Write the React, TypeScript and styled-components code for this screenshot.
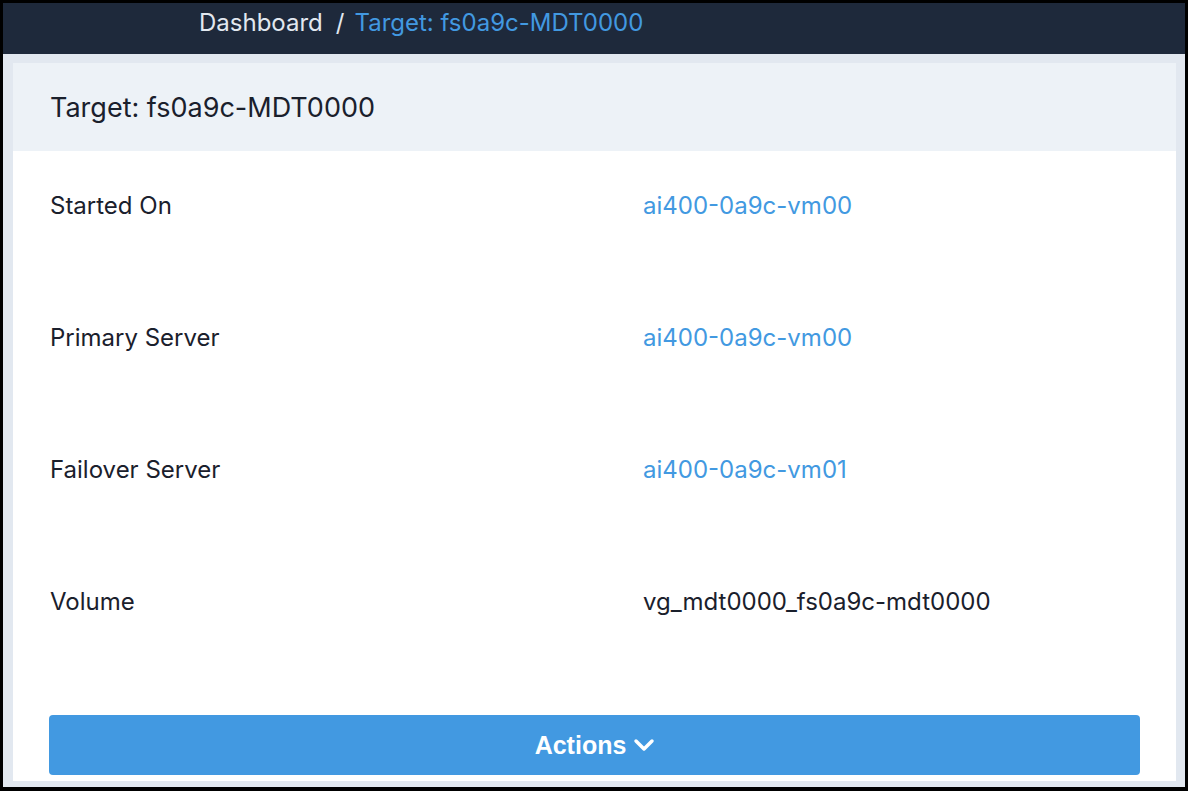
import React from "react";
import styled, { createGlobalStyle } from "styled-components";
import { ChevronDown } from "lucide-react";

const GlobalStyle = createGlobalStyle`
  html, body {
    margin: 0;
    padding: 0;
    background: #000;
  }
  body {
    font-family: Inter, "Noto Sans", sans-serif;
    color: #1a202c;
  }
`;

type Row = { label: string; value: string; link?: boolean };

const rows: Row[] = [
  { label: "Started On", value: "ai400-0a9c-vm00", link: true },
  { label: "Primary Server", value: "ai400-0a9c-vm00", link: true },
  { label: "Failover Server", value: "ai400-0a9c-vm01", link: true },
  { label: "Volume", value: "vg_mdt0000_fs0a9c-mdt0000" },
];

const App = () => {
  return (
    <>
      <GlobalStyle />
      <Frame>
        <NavBar>
          <Crumb>Dashboard</Crumb>
          <Separator>/</Separator>
          <CrumbActive>Target: fs0a9c-MDT0000</CrumbActive>
        </NavBar>
        <Main>
          <Card>
            <CardHeader>Target: fs0a9c-MDT0000</CardHeader>
            <CardBody>
              {rows.map((row) => (
                <DetailRow key={row.label}>
                  <Label>{row.label}</Label>
                  <Value $link={row.link}>{row.value}</Value>
                </DetailRow>
              ))}
              <ActionsButton>
                Actions
                <ChevronDown size={32} strokeWidth={2.6} />
              </ActionsButton>
            </CardBody>
          </Card>
        </Main>
      </Frame>
    </>
  );
};

const Frame = styled.div`
  box-sizing: border-box;
  width: 1188px;
  height: 791px;
  border: 3px solid #000;
  border-bottom-width: 4px;
  display: flex;
  flex-direction: column;
  overflow: hidden;
  background: #e2e8f0;
`;

const NavBar = styled.nav`
  flex: 0 0 51px;
  box-sizing: border-box;
  background: #1e293b;
  display: flex;
  align-items: flex-start;
  padding: 6px 0 0 196px;
  font-size: 24px;
  line-height: 28px;
`;

const Crumb = styled.span`
  color: #e2e8f0;
`;

const Separator = styled.span`
  color: #e2e8f0;
  margin: 0 10px 0 13px;
`;

const CrumbActive = styled.span`
  color: #4299e1;
`;

const Main = styled.main`
  flex: 1;
  padding: 9px 9px 0 10px;
  display: flex;
  flex-direction: column;
`;

const Card = styled.section`
  background: #fff;
  display: flex;
  flex-direction: column;
`;

const CardHeader = styled.h1`
  margin: 0;
  height: 88px;
  box-sizing: border-box;
  background: #edf2f7;
  display: flex;
  align-items: center;
  padding-left: 37px;
  font-size: 27px;
  font-weight: 400;
  color: #1a202c;
`;

const CardBody = styled.div`
  padding: 0 36px 6px;
  display: flex;
  flex-direction: column;
`;

const DetailRow = styled.div`
  display: grid;
  grid-template-columns: 593px 1fr;
  height: 132px;
  box-sizing: border-box;
  padding: 41px 0 0 1px;
  font-size: 24px;
  line-height: 28px;
`;

const Label = styled.div`
  color: #1a202c;
`;

const Value = styled.div<{ $link?: boolean }>`
  color: ${(p) => (p.$link ? "#4299e1" : "#1a202c")};
`;

const ActionsButton = styled.button`
  margin-top: 36px;
  height: 60px;
  border: none;
  border-radius: 4px;
  background: #4299e1;
  color: #fff;
  font-family: "Liberation Sans", Arial, sans-serif;
  font-weight: 700;
  font-size: 25px;
  display: flex;
  align-items: center;
  justify-content: center;
  gap: 2px;
  cursor: pointer;

  svg {
    margin-right: -6px;
  }
`;

export default App;
